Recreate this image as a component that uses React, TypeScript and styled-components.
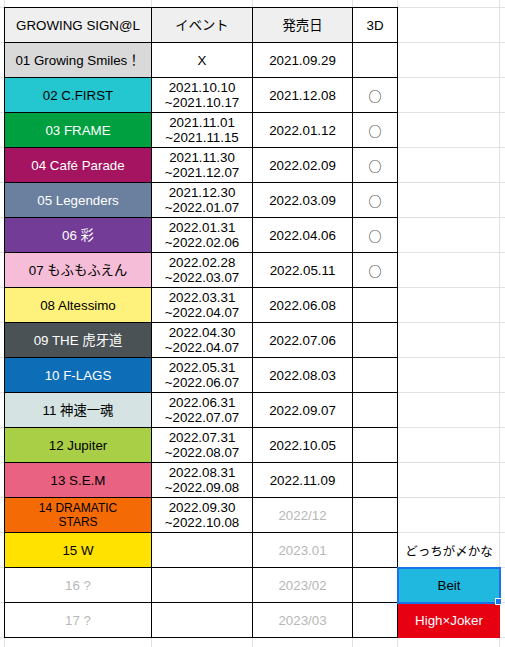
import React from 'react';
import styled, { createGlobalStyle } from 'styled-components';

const GRID = '#e2e2e2';
const MUTED = '#b7b7b7';

const GlobalStyle = createGlobalStyle`
  html, body {
    margin: 0;
    padding: 0;
    background: #fff;
  }
  body {
    font-family: "Liberation Sans", Arial, "Noto Sans CJK JP", sans-serif;
    font-size: 13.33px;
    color: #000;
  }
`;

// spreadsheet gridlines behind the table
const Sheet = styled.div`
  box-sizing: border-box;
  height: 100vh;
  min-height: 647px;
  padding: 7px 0 0 4px;
  overflow: hidden;
  background-color: #fff;
  background-image:
    linear-gradient(to bottom, ${GRID} 1px, transparent 1px),
    linear-gradient(${GRID}, ${GRID}),
    linear-gradient(${GRID}, ${GRID}),
    linear-gradient(${GRID}, ${GRID}),
    linear-gradient(${GRID}, ${GRID}),
    linear-gradient(${GRID}, ${GRID}),
    linear-gradient(${GRID}, ${GRID});
  background-size: 100% 35px, 1px 100%, 1px 100%, 1px 100%, 1px 100%, 1px 100%, 1px 100%;
  background-position: 0 7px, 4px 0, 151px 0, 252px 0, 352px 0, 397px 0, 499px 0;
  background-repeat: repeat-y, no-repeat, no-repeat, no-repeat, no-repeat, no-repeat, no-repeat;
`;

const Table = styled.div`
  display: grid;
  grid-template-columns: 148px 101px 100px 45px 102px;
  grid-template-rows: 36px;
  grid-auto-rows: 35px;
  width: max-content;
`;

const Cell = styled.div<{ $bg?: string; $fg?: string; $first?: boolean; $head?: boolean; $small?: boolean }>`
  box-sizing: border-box;
  display: flex;
  flex-direction: column;
  align-items: center;
  justify-content: center;
  text-align: center;
  white-space: nowrap;
  overflow: hidden;
  border-right: 1px solid #000;
  border-bottom: 1px solid #000;
  ${(p) => p.$first && 'border-left: 1px solid #000;'}
  ${(p) => p.$head && 'border-top: 1px solid #000;'}
  background: ${(p) => p.$bg ?? '#fff'};
  color: ${(p) => p.$fg ?? '#000'};
  font-size: ${(p) => (p.$small ? '12px' : '13.33px')};
  line-height: ${(p) => (p.$small ? '14px' : '15px')};
`;

const Mark = styled.span`
  font-family: "Noto Sans CJK JP", sans-serif;
  font-size: 13px;
  line-height: 15px;
  color: #222;
`;

const SideCell = styled.div<{ $kind?: 'blank' | 'note' | 'selected' | 'red' }>`
  position: relative;
  box-sizing: border-box;
  display: flex;
  align-items: center;
  justify-content: center;
  white-space: nowrap;
  background: ${(p) => (p.$kind === 'selected' ? '#20b8de' : p.$kind === 'red' ? '#e60012' : 'transparent')};
  color: ${(p) => (p.$kind === 'red' ? '#fff' : '#000')};
  font-size: ${(p) => (p.$kind === 'note' ? '12.5px' : '13.33px')};
  ${(p) => p.$kind === 'selected' && 'outline: 2px solid #1a73e8; outline-offset: -1px; z-index: 1;'}
`;

const Handle = styled.span`
  position: absolute;
  right: -2px;
  bottom: -2px;
  width: 5px;
  height: 5px;
  background: #1a73e8;
  border: 1px solid #fff;
`;

type Row = {
  name: React.ReactNode;
  bg?: string;
  fg?: string;
  small?: boolean;
  event: string[];
  date: string;
  dateMuted?: boolean;
  d3?: boolean;
  side?: React.ReactNode;
};

const rows: Row[] = [
  { name: '01 Growing Smiles！', bg: '#d9d9d9', event: ['X'], date: '2021.09.29' },
  { name: '02 C.FIRST', bg: '#24c6cf', event: ['2021.10.10', '~2021.10.17'], date: '2021.12.08', d3: true },
  { name: '03 FRAME', bg: '#00a040', fg: '#fff', event: ['2021.11.01', '~2021.11.15'], date: '2022.01.12', d3: true },
  { name: '04 Café Parade', bg: '#a51461', fg: '#fff', event: ['2021.11.30', '~2021.12.07'], date: '2022.02.09', d3: true },
  { name: '05 Legenders', bg: '#6b809f', fg: '#fff', event: ['2021.12.30', '~2022.01.07'], date: '2022.03.09', d3: true },
  { name: '06 彩', bg: '#723c97', fg: '#fff', event: ['2022.01.31', '~2022.02.06'], date: '2022.04.06', d3: true },
  { name: '07 もふもふえん', bg: '#f5bdd7', event: ['2022.02.28', '~2022.03.07'], date: '2022.05.11', d3: true },
  { name: '08 Altessimo', bg: '#fff27c', event: ['2022.03.31', '~2022.04.07'], date: '2022.06.08' },
  { name: '09 THE 虎牙道', bg: '#4b5255', fg: '#fff', event: ['2022.04.30', '~2022.04.07'], date: '2022.07.06' },
  { name: '10 F-LAGS', bg: '#0e6db7', fg: '#fff', event: ['2022.05.31', '~2022.06.07'], date: '2022.08.03' },
  { name: '11 神速一魂', bg: '#d5e3e3', event: ['2022.06.31', '~2022.07.07'], date: '2022.09.07' },
  { name: '12 Jupiter', bg: '#a9cf46', event: ['2022.07.31', '~2022.08.07'], date: '2022.10.05' },
  { name: '13 S.E.M', bg: '#ea6282', event: ['2022.08.31', '~2022.09.08'], date: '2022.11.09' },
  {
    name: (
      <>
        14 DRAMATIC
        <br />
        STARS
      </>
    ),
    bg: '#f46b05',
    small: true,
    event: ['2022.09.30', '~2022.10.08'],
    date: '2022/12',
    dateMuted: true,
  },
  { name: '15 W', bg: '#ffe200', event: [], date: '2023.01', dateMuted: true },
  { name: '16 ?', fg: MUTED, event: [], date: '2023/02', dateMuted: true },
  { name: '17 ?', fg: MUTED, event: [], date: '2023/03', dateMuted: true },
];

const side: Record<number, React.ReactNode> = {
  14: <SideCell $kind="note">どっちが〆かな</SideCell>,
  15: (
    <SideCell $kind="selected">
      Beit
      <Handle />
    </SideCell>
  ),
  16: <SideCell $kind="red">High×Joker</SideCell>,
};

export default function App() {
  return (
    <>
      <GlobalStyle />
      <Sheet>
        <Table>
          <Cell $first $head $bg="#efefef">GROWING SIGN@L</Cell>
          <Cell $head $bg="#efefef">イベント</Cell>
          <Cell $head $bg="#efefef">発売日</Cell>
          <Cell $head>3D</Cell>
          <SideCell />

          {rows.map((row, i) => (
            <React.Fragment key={i}>
              <Cell $first $bg={row.bg} $fg={row.fg} $small={row.small}>
                <span>{row.name}</span>
              </Cell>
              <Cell>
                {row.event.map((line) => (
                  <span key={line}>{line}</span>
                ))}
              </Cell>
              <Cell $fg={row.dateMuted ? MUTED : undefined}>{row.date}</Cell>
              <Cell>{row.d3 && <Mark>○</Mark>}</Cell>
              {side[i] ?? <SideCell />}
            </React.Fragment>
          ))}
        </Table>
      </Sheet>
    </>
  );
}
